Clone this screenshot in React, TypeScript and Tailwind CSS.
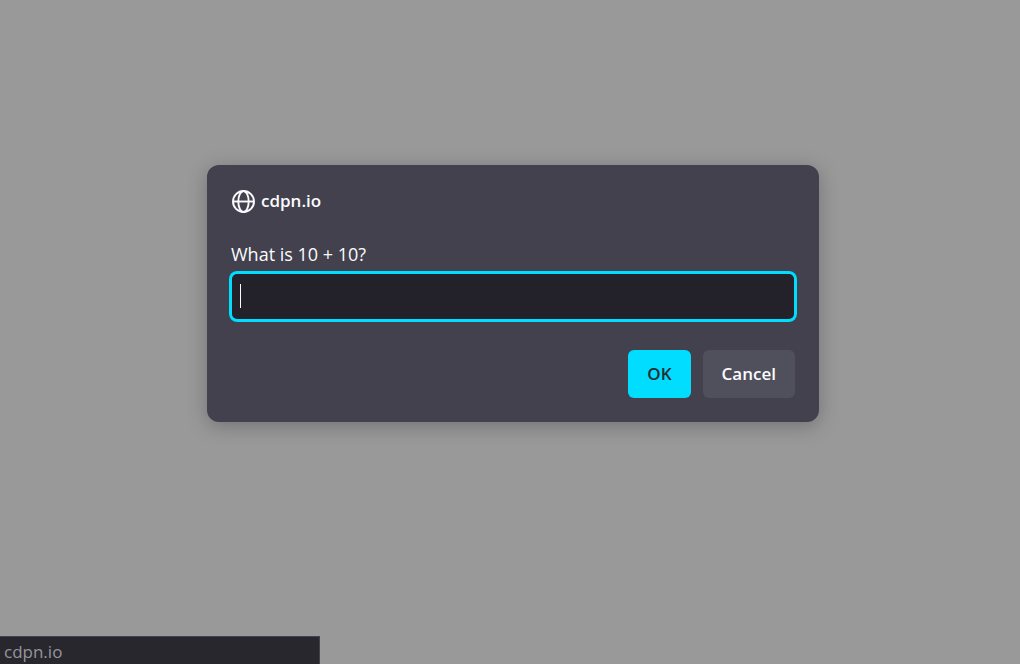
import type { FormEvent } from "react";

function GlobeIcon() {
  return (
    <svg
      aria-hidden="true"
      viewBox="0 0 24 24"
      className="size-6 shrink-0"
      fill="none"
      stroke="currentColor"
      strokeWidth="1.9"
    >
      <circle cx="12.5" cy="12.5" r="10.5" />
      <ellipse cx="12.5" cy="12.5" rx="5.2" ry="10.5" />
      <path d="M2 12.5h21" />
    </svg>
  );
}

function PromptDialog() {
  const submit = (event: FormEvent) => event.preventDefault();

  return (
    <form
      role="dialog"
      aria-labelledby="prompt-origin"
      onSubmit={submit}
      className="w-full max-w-[612px] rounded-xl bg-[#42414d] p-6 text-[#fbfbfe] shadow-[0_4px_20px_rgba(0,0,0,0.25)]"
    >
      <h1 id="prompt-origin" className="flex items-center gap-1.5 text-[17px] leading-6 font-semibold">
        <GlobeIcon />
        cdpn.io
      </h1>
      <label htmlFor="prompt-answer" className="mt-7 block text-lg leading-[26px]">
        What is 10 + 10?
      </label>
      <div className="relative -mx-0.5 mt-1 flex">
        <input
          id="prompt-answer"
          type="text"
          autoComplete="off"
          className="h-[51px] w-full rounded-lg bg-[#23222b] px-3 text-lg caret-transparent ring-[3px] ring-[#00ddff] outline-none ring-inset"
        />
        <span aria-hidden="true" className="pointer-events-none absolute top-[13px] left-[11px] h-6 w-px bg-[#fbfbfe]" />
      </div>
      <div className="mt-7 flex justify-end gap-3 text-[17px] leading-6 font-semibold">
        <button type="submit" className="h-12 rounded-md bg-[#00ddff] px-[19px] text-[#2b2a33]">
          OK
        </button>
        <button type="button" className="h-12 rounded-md bg-[#504f5c] px-[19px]">
          Cancel
        </button>
      </div>
    </form>
  );
}

export default function App() {
  return (
    <div className="flex min-h-screen flex-col bg-[#99999a] font-['Open_Sans','Noto_Sans',sans-serif]">
      <main className="flex flex-1 items-start justify-center pt-[165px] pl-1.5">
        <PromptDialog />
      </main>
      <footer className="h-7 w-80 border-t border-r border-[#42414d] bg-[#28272e] px-1 pt-[3px] text-[17px] leading-6 text-[#95959d]">
        cdpn.io
      </footer>
    </div>
  );
}
